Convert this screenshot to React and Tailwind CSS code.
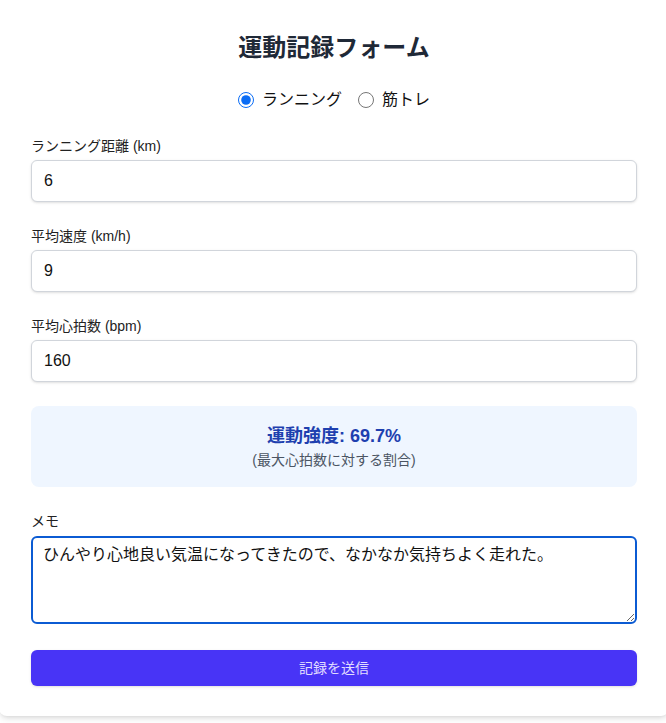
import React, { useState } from "react";

export default function App() {
  const [type, setType] = useState("running");
  const font = { fontFamily: '"Liberation Sans", "Noto Sans CJK JP", sans-serif' };
  return (
    <div className="w-[666px] h-[723px] overflow-hidden bg-white" style={font}>
      <div className="ml-[-1px] w-[670px] bg-white rounded-b-lg shadow-md p-8 pb-[30px]">
        <h1 className="text-2xl font-bold text-[#1f2937] text-center mb-6">運動記録フォーム</h1>
        <div className="flex justify-center items-center gap-4 mb-6 h-6 text-base text-[#111]">
          <label className="flex items-center gap-2">
            <input type="radio" name="t" checked={type === "running"} onChange={() => setType("running")} className="w-4 h-4 accent-[#0a6cf5]" />
            <span>ランニング</span>
          </label>
          <label className="flex items-center gap-2">
            <input type="radio" name="t" checked={type === "gym"} onChange={() => setType("gym")} className="w-4 h-4" />
            <span>筋トレ</span>
          </label>
        </div>
        <div className="flex flex-col gap-6">
          {[
            ["ランニング距離 (km)", "6"],
            ["平均速度 (km/h)", "9"],
            ["平均心拍数 (bpm)", "160"],
          ].map(([l, v]) => (
            <div key={l}>
              <label className="block text-sm leading-5 text-[#222] mb-1">{l}</label>
              <input
                defaultValue={v}
                className="block w-full h-[42px] px-3 border border-[#d1d5db] rounded-md shadow-sm text-base text-[#111] bg-white"
              />
            </div>
          ))}
          <div className="bg-[#eff6ff] rounded-lg p-4 text-center h-[81px]">
            <div className="text-lg leading-7 font-bold text-[#1e40af]">運動強度: 69.7%</div>
            <div className="text-sm leading-5 text-[#4b5563]">(最大心拍数に対する割合)</div>
          </div>
          <div>
            <label className="block text-sm leading-5 text-[#222] mb-[5px]">メモ</label>
            <textarea
              defaultValue="ひんやり心地良い気温になってきたので、なかなか気持ちよく走れた。"
              className="block w-full h-[88px] px-[10px] py-[5px] border-2 border-[#0b5bd3] rounded-md text-base leading-6 text-[#111] outline-none resize-y"
            />
          </div>
          <button className="w-full h-9 mt-[2px] rounded-md bg-[#4834f6] text-[#e0dcff] text-sm shadow-sm">記録を送信</button>
        </div>
      </div>
    </div>
  );
}
